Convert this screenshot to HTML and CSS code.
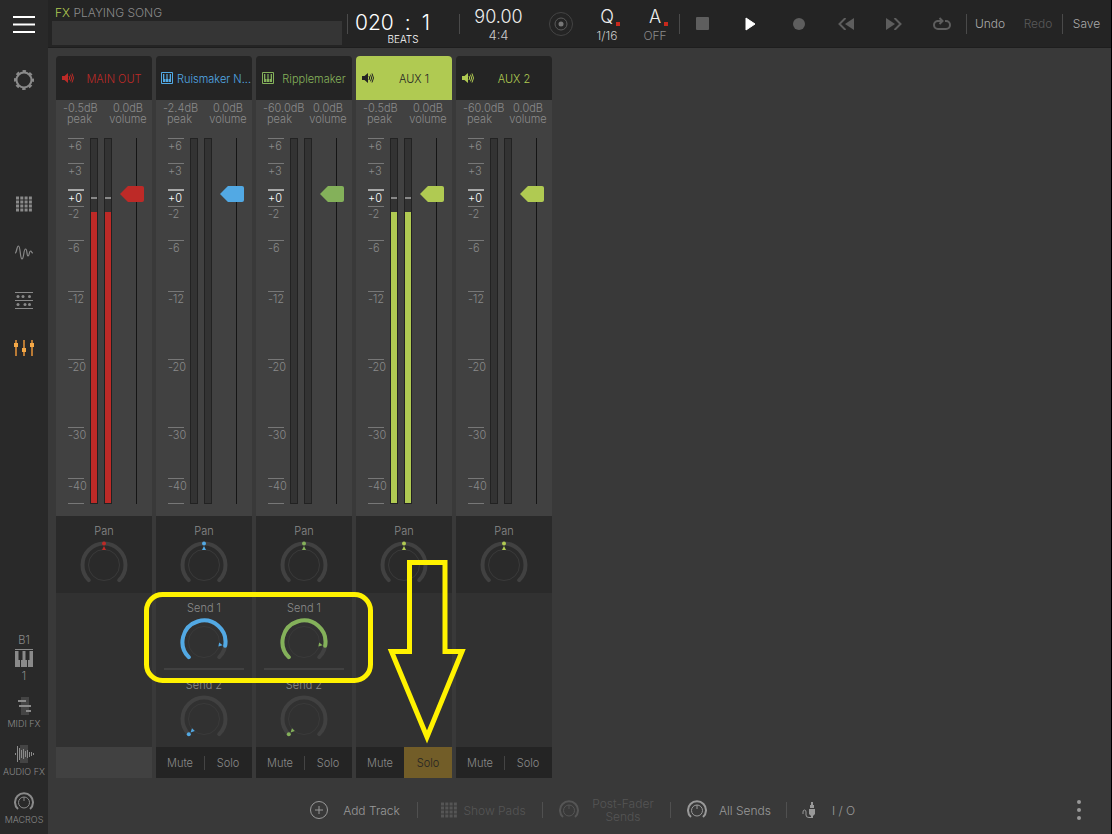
FILE: index.html
```html
<!DOCTYPE html>
<html lang="en">
<head>
  <meta charset="UTF-8">
  <title>Mixer</title>
  <link rel="stylesheet" href="styles.css">
</head>
<body>
  <svg class="defs" aria-hidden="true">
    <symbol id="speaker" viewBox="0 0 12 12">
      <path d="M0 4h2.500L6 1v10L2.500 8H0z" fill="currentColor"/>
      <path d="M7 4q1.400 2 0 4M8.500 2.700q2.200 3.300 0 6.600M10 1.500q3 4.500 0 9" fill="none" stroke="currentColor"/>
    </symbol>
    <symbol id="keys" viewBox="0 0 12 12">
      <path d="M.5.5h11v11H.5z" fill="none" stroke="currentColor"/>
      <path d="M2 2h1.300v5h1v3H2zM5.400 2h1.200v5h.6v3H4.800V7h.6zM8.700 2H10v8H7.700V7h1z" fill="currentColor"/>
    </symbol>
    <symbol id="grid" viewBox="0 0 16 16">
      <path d="M0 2h16M0 6h16M0 10h16M0 14h16" stroke="currentColor" stroke-width="3" stroke-dasharray="3 1.300"/>
    </symbol>
    <symbol id="dial" viewBox="0 0 20 20">
      <path d="M4 17A9 9 0 1 1 16 17" fill="none" stroke="currentColor" stroke-width="2"/>
      <circle cx="10" cy="10.500" r="5.500" fill="none" stroke="currentColor"/>
      <path d="M10 5v4" stroke="currentColor"/>
    </symbol>
  </svg>

  <nav class="sidebar">
    <button class="menu" aria-label="Menu"><svg width="22" height="18"><path d="M0 2h22M0 9.500h22M0 17h22" stroke="#fff" stroke-width="2"/></svg></button>
    <button class="settings" aria-label="Settings">
      <svg width="22" height="22" viewBox="0 0 22 22" fill="none" stroke="#8a8a8a">
        <circle cx="11" cy="11" r="7.500" stroke-width="2"/>
        <circle cx="11" cy="11" r="9" stroke-width="2" stroke-dasharray="3.500 3.568" stroke-dashoffset="1.750"/>
      </svg>
    </button>
    <button aria-label="Pads"><svg width="16" height="16"><use href="#grid"/></svg></button>
    <button aria-label="Wave"><svg width="18" height="16" fill="none" stroke="#8a8a8a" stroke-width="1.200"><path d="M0 9C2 9 1.500 2 3.500 2S5 15 7 15 8.500 5 10.500 5 11.500 12 13 12 14 7 15.500 7 16 9 18 9"/></svg></button>
    <button aria-label="Sequencer">
      <svg width="18" height="18" fill="#8a8a8a">
        <path d="M0 1.500h18M0 9.500h18M0 17.500h18" stroke="#8a8a8a"/>
        <circle cx="3" cy="5.500" r="1.500"/><circle cx="8" cy="5.500" r="1.500"/><circle cx="14.500" cy="5.500" r="1.500"/>
        <circle cx="3" cy="13.500" r="1.500"/><circle cx="10" cy="13.500" r="1.500"/><circle cx="14.500" cy="13.500" r="1.500"/>
      </svg>
    </button>
    <button aria-label="Mixer"><svg width="20" height="16"><path d="M2 0v16M10 0v16M18 0v16" stroke="#b97a35" stroke-width="2"/><path d="M0 3h4v4H0zM8 8h4v4H8zM16 3h4v4h-4z" fill="#f5a947"/></svg></button>
    <button class="keyboard">
      <span>B1</span>
      <svg width="18" height="18" fill="#8a8a8a"><path d="M0 0h18v1H0zM0 2h3.500v9H5v7H0zM7.500 2h3v9H12v7H6v-7h1.500zM14.500 2H18v16h-5v-7h1.500z"/></svg>
      <span>1</span>
    </button>
    <button class="tool"><svg width="20" height="20"><path d="M7 1h8v18H7z" fill="#444"/><path d="M4 5h8M5 10h12M12 15h5" stroke="#8a8a8a" stroke-width="2"/></svg>MIDI FX</button>
    <button class="tool"><svg width="20" height="20"><path d="M6 1h8v18H6z" fill="#444"/><path d="M1.500 9v2M3.500 2v16M5.500 4v12M7.500 6v8M9.500 5v10M11.500 7v6M13.500 6v8M15.500 8v5M17.500 8v4M19.500 9v2" stroke="#8a8a8a"/></svg>AUDIO FX</button>
    <button class="tool"><svg width="20" height="20"><use href="#dial"/></svg>MACROS</button>
  </nav>

  <div class="main">
    <header class="topbar">
      <div class="song">
        <div class="song-title"><span>FX</span> PLAYING SONG</div>
        <div class="overview"></div>
      </div>
      <div class="position"><div class="time"><span>020</span><span>:</span><span>1</span></div><span class="beats">BEATS</span></div>
      <div class="tempo"><span class="big">90.00</span><span class="small">4:4</span></div>
      <button class="metronome" aria-label="Metronome">
        <svg width="24" height="24" fill="none" stroke="#444"><circle cx="12" cy="12" r="11.500"/><circle cx="12" cy="12" r="6" stroke="#5a5a5a"/><circle cx="12" cy="12" r="2.500" fill="#777" stroke="none"/></svg>
      </button>
      <button class="option"><span class="big">Q</span><span class="small">1/16</span></button>
      <button class="option off"><span class="big">A</span><span class="small">OFF</span></button>
      <div class="transport">
        <button aria-label="Stop"><svg width="14" height="14"><rect width="13" height="13" rx="1"/></svg></button>
        <button aria-label="Play"><svg width="12" height="14"><path d="M1 1l9 6-9 6z" fill="#fff" stroke="#fff" stroke-linejoin="round"/></svg></button>
        <button aria-label="Record"><svg width="12" height="12"><circle cx="6" cy="6" r="6"/></svg></button>
        <button aria-label="Rewind"><svg width="16" height="12"><path d="M16 0v12L7 6z"/><path d="M7.500 0L1.500 6l6 6" fill="none" stroke="#5e5e5e" stroke-width="2"/></svg></button>
        <button aria-label="Forward"><svg width="16" height="12"><path d="M0 0v12l9-6z"/><path d="M8.500 0l6 6-6 6" fill="none" stroke="#5e5e5e" stroke-width="2"/></svg></button>
        <button aria-label="Loop"><svg width="18" height="14"><path d="M5 4a4 4 0 0 0 0 8h8a4 4 0 0 0 0-8h-1M4 4h5M6.500 1L9.500 4 6.500 7" fill="none" stroke="#5e5e5e" stroke-width="2"/></svg></button>
      </div>
      <div class="history"><button>Undo</button><button disabled>Redo</button></div>
      <div class="save"><button>Save</button></div>
    </header>

    <main class="mixer">
      <div class="strips" id="strips"></div>
      <svg class="marks" width="330" height="160" aria-hidden="true">
        <rect x="4.500" y="36.500" width="224" height="86" rx="16"/>
        <path d="M267.500 4.500h35.500v89h17L285 179 249.500 93.500h18z"/>
      </svg>
    </main>

    <footer class="bottombar">
      <div class="actions">
        <button><svg width="20" height="20" fill="none" stroke="currentColor"><circle cx="10" cy="10" r="8.500"/><path d="M10 6v8M6 10h8"/></svg><span>Add Track</span></button>
        <button class="pads" disabled><svg width="16" height="16"><use href="#grid"/></svg><span>Show Pads</span></button>
        <button disabled><svg width="20" height="20"><use href="#dial"/></svg><span>Post-Fader<br>Sends</span></button>
        <button><svg width="20" height="20"><use href="#dial"/></svg><span>All Sends</span></button>
        <button class="io"><svg width="20" height="20"><path d="M11 2h2v4h-2zM10 5h4v3h-4zM9 9h6v5l-2 2v2h-2v-2l-2-2z" fill="currentColor"/><path d="M3 14v-2q0-2 1.500-2T6 12v3q0 2.500 3 2.500h3" fill="none" stroke="currentColor"/></svg><span>I / O</span></button>
      </div>
      <button class="more" aria-label="More"><svg width="4" height="20" fill="#999"><circle cx="2" cy="2" r="2"/><circle cx="2" cy="10" r="2"/><circle cx="2" cy="18" r="2"/></svg></button>
    </footer>
  </div>

  <script src="script.js"></script>
</body>
</html>
```
FILE: styles.css
```css
* { box-sizing: border-box; }
body { margin: 0; min-height: 100vh; display: flex; background: #393939; border-right: 1px solid #000; color: #8a8a8a; font: 300 12px Inter, "Liberation Sans", sans-serif; }
button { display: flex; align-items: center; justify-content: center; margin: 0; padding: 0; border: 0; background: none; color: inherit; font: inherit; }
svg { display: block; flex: none; }
.defs { position: absolute; width: 0; height: 0; }

.sidebar { flex: none; width: 48px; display: flex; flex-direction: column; padding-bottom: 1px; background: #292929; }
.sidebar button { height: 48px; }
.sidebar .settings { height: 64px; margin-bottom: 68px; }
.sidebar .keyboard { flex-direction: column; gap: 2px; height: 62px; margin-top: auto; font-size: 11px; line-height: 14px; }
.sidebar .tool { flex-direction: column; gap: 2px; font-size: 9px; line-height: 12px; white-space: nowrap; }

.main { flex: 1; min-width: 0; display: flex; flex-direction: column; }
.topbar { display: flex; align-items: center; height: 48px; background: #242424; border-bottom: 1px solid #1e1e1e; }
.song { flex: 1; padding: 2px 5px 0 4px; }
.song-title { padding-left: 3px; line-height: 16px; }
.song-title span { color: #b0ca52; }
.overview { height: 24px; background: #353535; }
.position, .tempo, .option { display: flex; flex-direction: column; align-items: center; }
.position, .history, .save, .transport, .tempo { background: linear-gradient(#4a4a4a, #4a4a4a) left / 1px 20px no-repeat; }
.position { align-self: stretch; width: 112px; padding-top: 11px; color: #fff; }
.time { align-self: flex-start; display: flex; gap: 11px; padding-left: 8px; font-size: 21px; line-height: 23px; }
.beats { font-size: 10px; line-height: 10px; }
.tempo { width: 79px; padding-top: 3px; color: #eee; }
.big { font-size: 18px; line-height: 21px; }
.small { font-size: 13px; line-height: 17px; color: #ccc; }
.metronome { width: 45px; }
.option { width: 48px; padding-top: 3px; color: #eee; position: relative; }
.option::after { content: ""; position: absolute; top: 19px; right: 11px; width: 4px; height: 4px; background: #c9291c; }
.option .small { font-size: 12px; }
.off .small { color: #8a8a8a; }
.transport { display: flex; width: 287px; fill: #5e5e5e; }
.transport button { flex: 1; height: 40px; }
.history { display: flex; width: 96px; }
.history button, .save button { flex: 1; height: 40px; color: #aaa; }
.history button:disabled { color: #5a5a5a; }
.save { display: flex; width: 49px; }

.mixer { position: relative; flex: 1; padding: 8px 8px 0; }
.strips { display: flex; gap: 4px; }
.strip { width: 96px; display: flex; flex-direction: column; border-radius: 4px 4px 0 0; background: #313131; }
.red { --tint: #bd2a27; }
.blue { --tint: #52a9e4; }
.green { --tint: #84b15a; }
.lime { --tint: #b0ca52; }
.strip-head { height: 44px; gap: 4px; padding: 0 2px 0 6px; border-radius: 4px 4px 0 0; background: #242424; color: var(--tint); font-size: 11px; }
.strip-head span { flex: 1; padding-top: 2px; white-space: nowrap; }
.selected .strip-head { background: #b0ca52; color: #242424; }

.levels { padding: 3px 0 12px; background: #414141; font-size: 11px; }
.readout { display: grid; grid-template-columns: 48px 48px; margin-bottom: 13px; line-height: 11px; }
.peak { padding-left: 7px; white-space: nowrap; }
.peak span { padding-left: 4px; }
.volume { text-align: center; }
.fader-row { display: flex; height: 366px; padding: 0 8px 0 12px; }
.scale { display: grid; grid-template-columns: 16px; grid-template-rows: 25fr 26fr 17fr 34fr 51fr 68fr 68fr 51fr 25fr 1px; width: 16px; margin-right: 6px; line-height: 15px; }
.scale span { border-top: 1px solid #777; white-space: nowrap; }
.scale .zero { border-top: 2px solid #aaa; color: #fff; line-height: 14px; }
.meter { position: relative; display: flex; align-items: flex-end; width: 8px; margin-right: 6px; border: 1px solid #222; background: #333; }
.fill { width: 100%; background: var(--tint); }
.hold { position: absolute; top: 58px; left: 0; right: 0; height: 2px; background: #888; }
.fader { appearance: none; writing-mode: vertical-lr; direction: rtl; width: 24px; height: 366px; margin: 0 0 0 auto; background: linear-gradient(#151515, #151515) 16px 0 / 1px 100% no-repeat; }
.fader::-webkit-slider-thumb { appearance: none; width: 24px; height: 16px; border-radius: 2px; background: var(--tint); clip-path: polygon(0 50%, 33% 0, 100% 0, 100% 100%, 33% 100%); }

.knob { position: relative; display: flex; flex-direction: column; align-items: center; gap: 3px; height: 77px; padding-top: 8px; font-size: 11px; line-height: 14px; }
.knob input { position: absolute; inset: 25px 24px 4px; width: 48px; margin: 0; opacity: 0; }
.pan { background: #2a2a2a; }
.sends { height: 154px; }
.sends .knob { margin: 0 8px; }
.sends .knob:first-child { border-bottom: 2px solid #414141; }
.sends .knob input { left: 16px; }
.track { fill: none; stroke: #414141; stroke-width: 4; stroke-linecap: round; }
.value { fill: none; stroke: var(--tint); stroke-width: 4; stroke-linecap: round; }
.inner { fill: none; stroke: #3a3a3a; }
.pointer { fill: var(--tint); }

.switches { display: flex; height: 31px; background: #414141; }
.switches button { flex: 1; background: #242424; font-size: 11px; }
.switches button + button:not(.on) { background: linear-gradient(#444, #444) left / 1px 14px no-repeat #242424; }
.switches .on { background: #725d28; color: #242424; }

.marks { position: absolute; left: 94px; top: 510px; overflow: visible; fill: none; stroke: #fff200; stroke-width: 5; pointer-events: none; }

.bottombar { display: grid; grid-template-columns: 1fr auto 1fr; align-items: center; height: 56px; padding-top: 8px; color: #999; }
.actions { grid-column: 2; display: grid; grid-template-columns: 125px 125px 128px 116px 81px; align-items: center; line-height: 13px; }
.actions button { height: 26px; padding: 0 3px 0 17px; }
.actions button + button { background: linear-gradient(#505050, #505050) left / 1px 16px no-repeat; }
.actions button:disabled { color: #555; }
.actions span { flex: 1; }
.actions .pads { padding: 0 10px 0 24px; }
.actions .io { padding: 0 0 0 14px; }
.more { justify-self: end; width: 64px; height: 40px; }
```
FILE: script.js
```js
const channels = [
  { name: 'MAIN OUT', icon: 'speaker', color: 'red', peak: '-0.5dB', level: 80 },
  { name: 'Ruismaker N...', icon: 'keys', color: 'blue', peak: '-2.4dB', level: 0, sends: [0.87, 0], mute: true },
  { name: 'Ripplemaker', icon: 'keys', color: 'green', peak: '-60.0dB', level: 0, sends: [0.87, 0], mute: true },
  { name: 'AUX 1', icon: 'speaker', color: 'lime', peak: '-0.5dB', level: 80, mute: true, solo: true, selected: true },
  { name: 'AUX 2', icon: 'speaker', color: 'lime', peak: '-60.0dB', level: 0, mute: true }
];

const scale = ['+6', '+3', '+0', '-2', '-6', '-12', '-20', '-30', '-40', ''];

// Point on the dial for a value from 0 to 1
function dialPoint(value, r) {
  const a = (135 + value * 270) * Math.PI / 180;
  return [24 + r * Math.cos(a), 24 + r * Math.sin(a)];
}

function arc(value) {
  const large = value * 270 > 180 ? 1 : 0;
  return `M${dialPoint(0, 21.5)} A21.5 21.5 0 ${large} 1 ${dialPoint(value, 21.5)}`;
}

function knob(label, value, cls) {
  const isPan = cls === 'pan';
  const dot = dialPoint(value, 21.5);
  return `
    <label class="knob ${cls}">${label}
      <svg width="48" height="48">
        <path class="track" d="${arc(1)}"/>
        <circle class="inner" cx="24" cy="24" r="15.5"/>
        ${!isPan && value > 0 ? `<path class="value" d="${arc(value)}"/>` : `<circle class="pointer" cx="${dot[0]}" cy="${dot[1]}" r="2"/>`}
        <path class="pointer" d="M22 9h4l-2-4z" transform="rotate(${value * 270 - 135} 24 24)"/>
      </svg>
      <input type="range" min="0" max="100" value="${value * 100}">
    </label>`;
}

function meter(level) {
  return `<div class="meter"><div class="fill" style="height: ${level}%"></div>${level ? '<div class="hold"></div>' : ''}</div>`;
}

document.getElementById('strips').innerHTML = channels.map(c => `
  <section class="strip ${c.color} ${c.selected ? 'selected' : ''}">
    <button class="strip-head"><svg width="12" height="12"><use href="#${c.icon}"/></svg><span>${c.name}</span></button>
    <div class="levels">
      <div class="readout">
        <div class="peak">${c.peak}<br><span>peak</span></div>
        <div class="volume">0.0dB<br>volume</div>
      </div>
      <div class="fader-row">
        <div class="scale">${scale.map(s => `<span class="${s === '+0' ? 'zero' : ''}">${s}</span>`).join('')}</div>
        ${meter(c.level)}${meter(c.level)}
        <input class="fader" type="range" min="0" max="350" value="302" aria-label="${c.name} volume">
      </div>
    </div>
    ${knob('Pan', 0.5, 'pan')}
    <div class="sends">${(c.sends || []).map((v, i) => knob('Send ' + (i + 1), v, 'send')).join('')}</div>
    <div class="switches">${c.mute ? `<button>Mute</button><button class="${c.solo ? 'on' : ''}">Solo</button>` : ''}</div>
  </section>`).join('');
```
